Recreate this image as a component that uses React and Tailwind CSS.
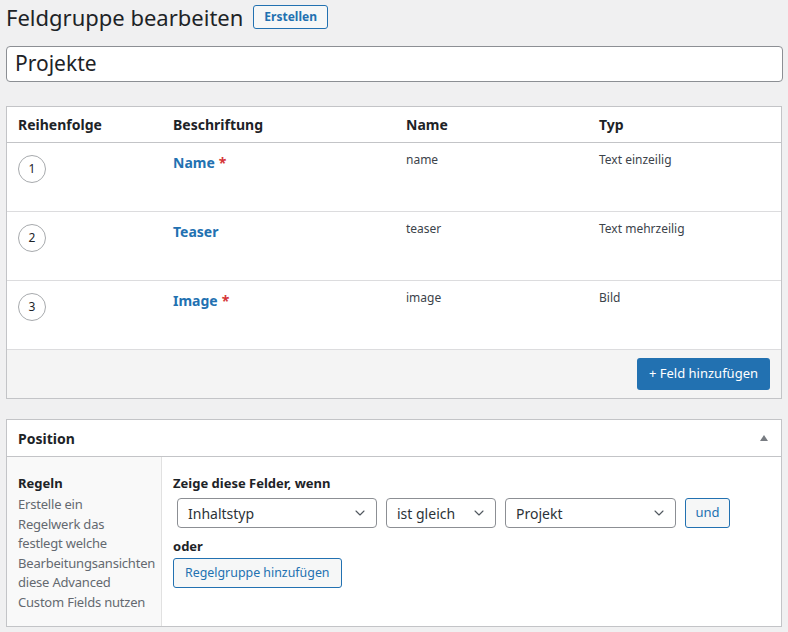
import { ChevronDown } from 'lucide-react';

const fields = [
    { order: 1, label: 'Name', required: true, name: 'name', type: 'Text einzeilig' },
    { order: 2, label: 'Teaser', required: false, name: 'teaser', type: 'Text mehrzeilig' },
    { order: 3, label: 'Image', required: true, name: 'image', type: 'Bild' },
];

const Select = ({ value, className }) => (
    <div className={`h-[30px] flex items-center justify-between pl-[10px] pr-2 bg-white border border-[#8c8f94] rounded-[4px] text-[14px] text-[#2c3338] ${className}`}>
        <span>{value}</span>
        <ChevronDown className="w-4 h-4 text-[#50575e]" strokeWidth={1.6} />
    </div>
);

const App = () => {
    return (
        <div className="min-h-[632px] bg-[#f0f0f1] px-[6px] pt-[4px] text-[#1d2327] font-['Noto_Sans','Open_Sans',sans-serif]">
            {/* Title */}
            <div className="flex items-center gap-[10px] h-[26px]">
                <h1 className="text-[22px] leading-none">Feldgruppe bearbeiten</h1>
                <button className="h-[24px] px-[10px] border border-[#2271b1] rounded-[3px] bg-[#f6f7f7] text-[12px] font-bold text-[#2271b1]">
                    Erstellen
                </button>
            </div>

            <div className="mt-[16px] h-[36px] w-[777px] flex items-center px-[8px] bg-white border border-[#8c8f94] rounded-[4px] text-[21px]">
                Projekte
            </div>

            {/* Fields */}
            <div className="mt-[24px] w-[776px] bg-white border border-[#c3c4c7]">
                <div className="grid grid-cols-[155px_233px_193px_1fr] h-[36px] items-center px-[11px] border-b border-[#c3c4c7] text-[14px] font-bold">
                    <div>Reihenfolge</div>
                    <div>Beschriftung</div>
                    <div>Name</div>
                    <div>Typ</div>
                </div>
                {fields.map((f) => (
                    <div key={f.order} className="grid grid-cols-[155px_233px_193px_1fr] h-[69px] px-[11px] border-b border-[#dcdcde] items-start">
                        <div className="pt-[12px]">
                            <div className="w-[28px] h-[28px] rounded-full border border-[#a7aaad] flex items-center justify-center text-[12px] text-[#1d2327]">
                                {f.order}
                            </div>
                        </div>
                        <div className="pt-[9px] text-[14px] font-bold text-[#2271b1]">
                            {f.label}
                            {f.required && <span className="text-[#d63638] ml-[4px]">*</span>}
                        </div>
                        <div className="pt-[8px] text-[12px] text-[#3c434a]">{f.name}</div>
                        <div className="pt-[8px] text-[12px] text-[#3c434a]">{f.type}</div>
                    </div>
                ))}
                <div className="h-[48px] bg-[#f4f4f4] flex items-center justify-end pr-[11px]">
                    <button className="h-[32px] px-[12px] bg-[#2271b1] rounded-[3px] text-white text-[13px]">
                        + Feld hinzufügen
                    </button>
                </div>
            </div>

            {/* Position */}
            <div className="mt-[20px] w-[776px] h-[208px] bg-white border border-[#c3c4c7] flex flex-col">
                <div className="h-[37px] flex items-center justify-between px-[11px] border-b border-[#c3c4c7]">
                    <span className="text-[14px] font-bold">Position</span>
                    <span className="w-0 h-0 border-l-[4px] border-r-[4px] border-b-[6px] border-l-transparent border-r-transparent border-b-[#787c82] mr-[2px]" />
                </div>
                <div className="flex flex-1">
                    <div className="w-[155px] bg-[#f9f9f9] border-r border-[#e1e1e1] px-[11px] pt-[16px] text-[13px]">
                        <div className="font-bold text-[#1d2327] leading-[20px]">Regeln</div>
                        <p className="mt-[2px] text-[#646970] leading-[19.6px] whitespace-nowrap tracking-[-0.2px]">
                            Erstelle ein<br />
                            Regelwerk das<br />
                            festlegt welche<br />
                            Bearbeitungsansichten<br />
                            diese Advanced<br />
                            Custom Fields nutzen
                        </p>
                    </div>
                    <div className="flex-1 pl-[11px] pt-[16px] text-[13px]">
                        <div className="font-bold leading-[20px]">Zeige diese Felder, wenn</div>
                        <div className="mt-[5px] ml-[4px] flex items-center gap-[9px]">
                            <Select value="Inhaltstyp" className="w-[200px]" />
                            <Select value="ist gleich" className="w-[110px]" />
                            <Select value="Projekt" className="w-[171px]" />
                            <button className="h-[30px] w-[45px] border border-[#2271b1] rounded-[3px] bg-[#f6f7f7] text-[13px] text-[#2271b1]">
                                und
                            </button>
                        </div>
                        <div className="mt-[9px] font-bold leading-[18px]">oder</div>
                        <button className="mt-[3px] h-[30px] px-[11px] border border-[#2271b1] rounded-[3px] bg-[#f6f7f7] text-[12.4px] text-[#2271b1]">
                            Regelgruppe hinzufügen
                        </button>
                    </div>
                </div>
            </div>
        </div>
    );
};

export default App;
